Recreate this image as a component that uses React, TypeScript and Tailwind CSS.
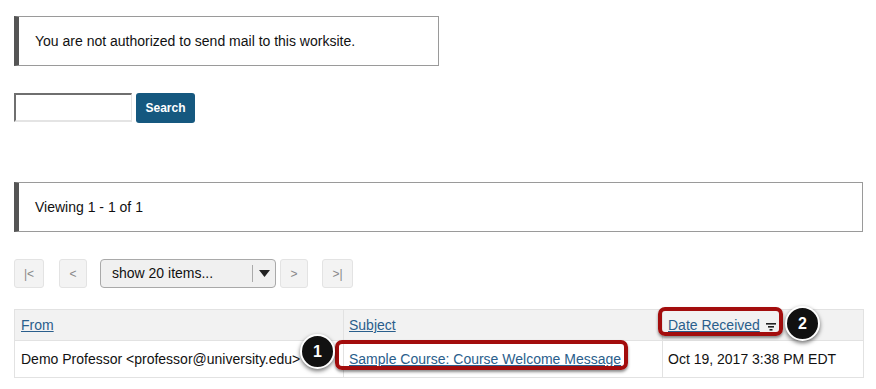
import React from "react";

const font = { fontFamily: '"Liberation Sans", Arial, sans-serif' };

function Alert({ text, width }: { text: string; width: string }) {
  return (
    <div
      className={`${width} h-[50px] flex items-center border border-[#9a9a9a] border-l-[5px] border-l-[#555] bg-white pl-[16px] text-[14px] text-[#111]`}
    >
      {text}
    </div>
  );
}

function PagerButton({ label, width }: { label: string; width: string }) {
  return (
    <button className={`${width} h-[29px] rounded-[3px] border border-[#e3e3e3] bg-[#f3f3f3] text-[12px] text-[#888] flex items-center justify-center`}>
      {label}
    </button>
  );
}

function Badge({ n, className }: { n: string; className: string }) {
  return (
    <div
      className={`absolute w-[35px] h-[35px] rounded-full bg-[#111] border-[2px] border-white shadow-[0_2px_4px_rgba(0,0,0,0.55)] flex items-center justify-center text-white text-[16px] font-bold ${className}`}
    >
      {n}
    </div>
  );
}

function SortIcon() {
  return (
    <svg width="10" height="8" viewBox="0 0 10 8" className="inline-block ml-[6px] align-[-1px]">
      <rect x="0" y="0" width="10" height="1.6" fill="#222" />
      <rect x="2" y="3" width="6" height="1.6" fill="#222" />
      <rect x="3.5" y="6" width="3" height="1.6" fill="#222" />
    </svg>
  );
}

export default function App() {
  return (
    <div className="w-[876px] h-[389px] bg-white overflow-hidden" style={font}>
      <div className="pl-[14px] pt-[16px] w-[863px]">
        <Alert text="You are not authorized to send mail to this worksite." width="w-[425px]" />

        <div className="mt-[27px] flex items-start gap-[4px]">
          <input
            className="w-[118px] h-[29px] border-[2px] border-[#6f6f6f] border-r-[#e4e4e4] border-b-[#e4e4e4] border-r bg-white outline-none"
          />
          <button className="w-[59px] h-[30px] rounded-[3px] bg-[#15587f] text-white text-[12px] font-bold">
            Search
          </button>
        </div>

        <div className="mt-[59px]">
          <Alert text="Viewing 1 - 1 of 1" width="w-[849px]" />
        </div>

        <div className="mt-[27px] flex items-center">
          <PagerButton label="|<" width="w-[30px]" />
          <div className="ml-[15px]">
            <PagerButton label="<" width="w-[28px]" />
          </div>
          <div className="ml-[13px] w-[176px] h-[29px] rounded-[4px] border border-[#a9a9a9] bg-[#f0f0f0] flex items-center">
            <span className="flex-1 pl-[11px] text-[14px] text-[#111]">show 20 items...</span>
            <span className="w-px h-[17px] bg-[#aaa]" />
            <span className="w-[22px] flex justify-center">
              <svg width="11" height="7" viewBox="0 0 11 7">
                <path d="M0 0 L11 0 L5.5 7 Z" fill="#222" />
              </svg>
            </span>
          </div>
          <div className="ml-[4px]">
            <PagerButton label=">" width="w-[28px]" />
          </div>
          <div className="ml-[14px]">
            <PagerButton label=">|" width="w-[31px]" />
          </div>
        </div>

        <div className="relative mt-[21px]">
          <table className="w-[849px] table-fixed border-collapse text-[14px]">
            <colgroup>
              <col className="w-[329px]" />
              <col className="w-[319px]" />
              <col className="w-[201px]" />
            </colgroup>
            <thead>
              <tr className="h-[31px] bg-[#f2f2f2]">
                <th className="text-left font-normal pl-[6px] border border-[#e2e2e2]">
                  <a className="text-[#2a5e8c] underline">From</a>
                </th>
                <th className="text-left font-normal pl-[5px] border border-[#e2e2e2]">
                  <a className="text-[#2a5e8c] underline">Subject</a>
                </th>
                <th className="text-left font-normal pl-[5px] border border-[#e2e2e2]">
                  <a className="text-[#2a5e8c] underline">
                    Date Received
                    <SortIcon />
                  </a>
                </th>
              </tr>
            </thead>
            <tbody>
              <tr className="h-[37px]">
                <td className="pl-[6px] text-[#111] border border-[#e2e2e2] whitespace-nowrap">
                  Demo Professor &lt;professor@university.edu&gt;
                </td>
                <td className="pl-[5px] border border-[#e2e2e2] whitespace-nowrap">
                  <a className="text-[#2a5e8c] underline">Sample Course: Course Welcome Message</a>
                </td>
                <td className="pl-[5px] text-[#111] border border-[#e2e2e2] whitespace-nowrap">
                  Oct 19, 2017 3:38 PM EDT
                </td>
              </tr>
            </tbody>
          </table>

          <div className="absolute left-[321px] top-[31px] w-[293px] h-[30px] rounded-[7px] border-[4px] border-[#a30d0d] shadow-[0_2px_3px_rgba(0,0,0,0.45)]" />
          <div className="absolute left-[644px] top-[-2px] w-[125px] h-[29px] rounded-[7px] border-[4px] border-[#a30d0d] shadow-[0_2px_3px_rgba(0,0,0,0.45)]" />
          <Badge n="1" className="left-[286px] top-[25px]" />
          <Badge n="2" className="left-[771px] top-[-3px]" />
        </div>
      </div>
    </div>
  );
}
